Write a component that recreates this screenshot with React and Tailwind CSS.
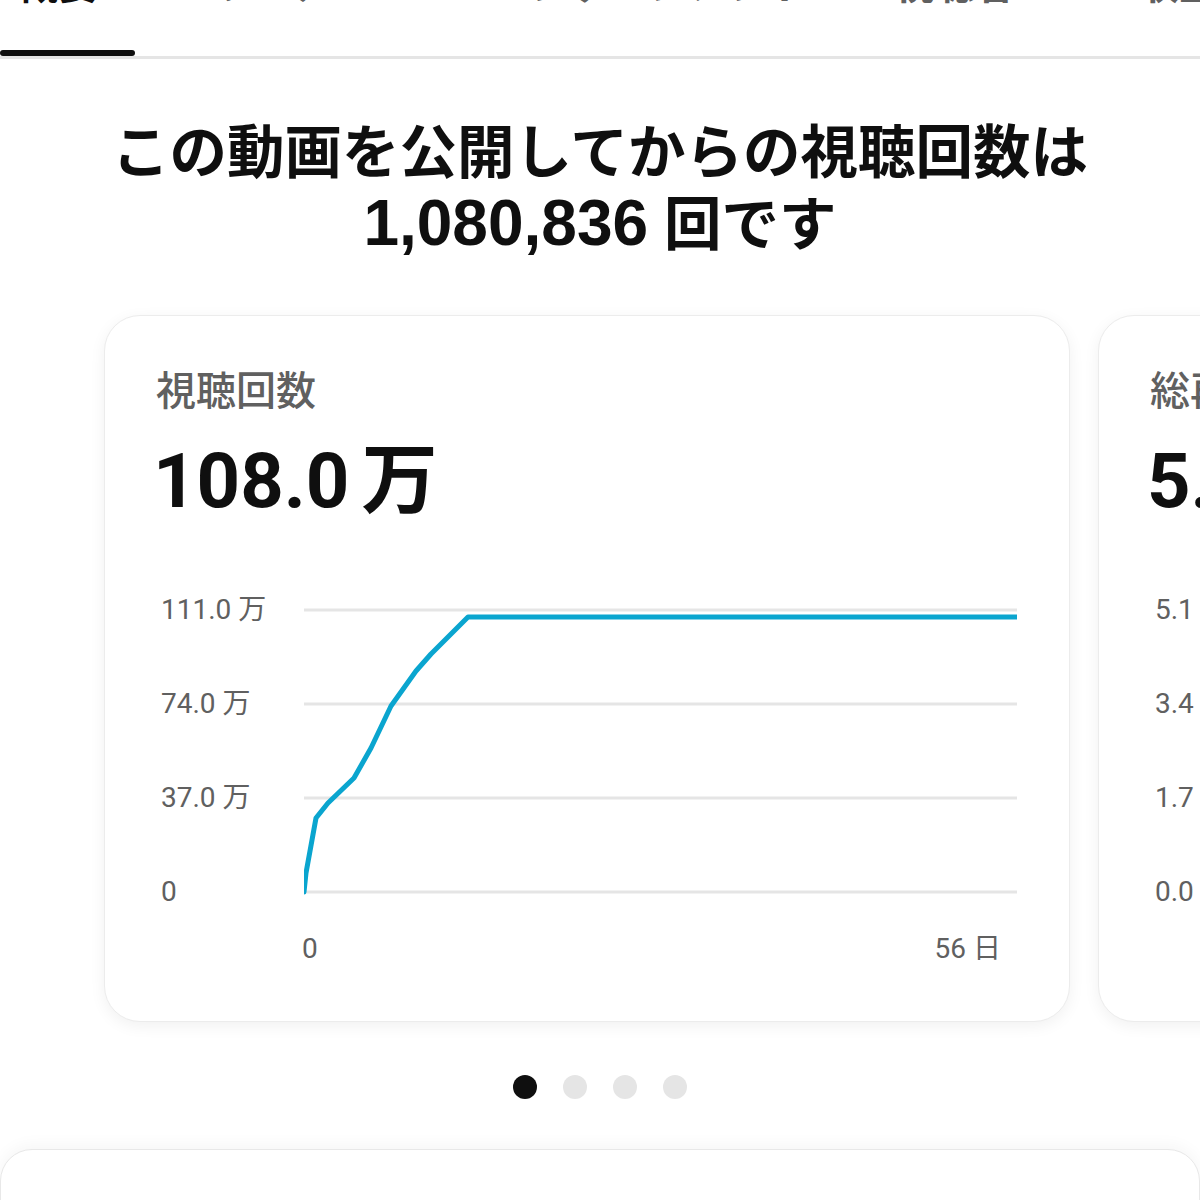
const TABS = [
  { label: '概要', active: true, cls: 'w-[135px] pl-[18px] text-[#0f0f0f]' },
  { label: 'リーチ', cls: 'ml-[75px] text-[#606060]' },
  { label: 'エンゲージメント', cls: 'ml-[160px] text-[#606060]' },
  { label: '視聴者', cls: 'ml-[85px] text-[#606060]' },
  { label: '収益', cls: 'ml-[125px] text-[#606060]' },
]

const VIEWS_LINE = [
  [0, 329], [2, 310], [12, 255], [24, 240], [50, 215], [67, 185],
  [87, 143], [112, 108], [127, 91], [164, 54], [713, 54],
]

const CARDS = [
  {
    title: '視聴回数',
    value: '108.0',
    unit: '万',
    ticks: ['111.0 万', '74.0 万', '37.0 万', '0'],
    line: VIEWS_LINE,
  },
  {
    title: '総再生時間（単位: 時間）',
    value: '5.0',
    unit: '万',
    ticks: ['5.1 万', '3.4 万', '1.7 万', '0.0'],
    line: [[0, 329], [10, 240], [60, 150], [170, 60], [713, 60]],
  },
]

function Chart({ ticks, line }) {
  const pts = line.map(([x, y]) => `${x},${y}`).join(' ')
  return (
    <div>
      <div className="flex">
        <div className="w-[148px] shrink-0 pl-[5px] flex flex-col">
          {ticks.map((t) => (
            <div key={t} className="h-[94px] flex items-center text-[28px] text-[#606060] whitespace-nowrap">
              {t}
            </div>
          ))}
        </div>
        <svg width="713" height="376" viewBox="0 0 713 376" className="shrink-0">
          {[47, 141, 235, 329].map((y) => (
            <line key={y} x1="0" x2="713" y1={y} y2={y} stroke="#e5e5e5" strokeWidth="3" />
          ))}
          <polyline points={pts} fill="none" stroke="#0aa5cf" strokeWidth="5" strokeLinejoin="round" strokeLinecap="round" />
        </svg>
      </div>
      {/* x axis */}
      <div className="-mt-[6px] ml-[146px] pr-[14px] flex justify-between text-[28px] leading-[32px] text-[#606060]">
        <span>0</span>
        <span>56 日</span>
      </div>
    </div>
  )
}

function StatCard({ card }) {
  return (
    <div className="w-[966px] h-[707px] shrink-0 rounded-[36px] bg-white border border-[#ececec] shadow-[0_4px_16px_rgba(0,0,0,0.06)] pt-[52px] pl-[51px] pr-[54px]">
      <p className="text-[40px] leading-[48px] font-medium text-[#606060] whitespace-nowrap">{card.title}</p>
      <p className="mt-[28px] -ml-[3px] text-[76px] leading-[74px] font-bold text-[#0f0f0f] whitespace-nowrap">
        {card.value}
        <span className="ml-[12px]">{card.unit}</span>
      </p>
      <div className="mt-[45px]">
        <Chart ticks={card.ticks} line={card.line} />
      </div>
    </div>
  )
}

export default function App() {
  return (
    <div className="w-[1200px] h-[1200px] overflow-hidden bg-white font-[Roboto,'Noto_Sans_CJK_JP',sans-serif]">
      {/* tabs */}
      <div className="h-[59px] border-b-[3px] border-[#e5e5e5] flex">
        {TABS.map((t) => (
          <div key={t.label} className={`shrink-0 flex flex-col ${t.cls}`}>
            <span className="-mt-[34px] text-[40px] leading-[40px] font-bold whitespace-nowrap">{t.label}</span>
            {t.active && <div className="mt-auto -ml-[18px] h-[6px] w-[135px] rounded-full bg-[#0f0f0f]" />}
          </div>
        ))}
      </div>

      {/* headline */}
      <h1 className="mt-[58px] text-center text-[57.5px] leading-[72px] font-bold text-[#0f0f0f] font-['Liberation_Sans','Noto_Sans_CJK_JP',sans-serif]">
        この動画を公開してからの視聴回数は
        <br />
        <span className="text-[64px] leading-none">1,080,836</span> 回です
      </h1>

      {/* carousel */}
      <div className="mt-[54px] pl-[104px] flex gap-[28px]">
        {CARDS.map((c) => (
          <StatCard key={c.title} card={c} />
        ))}
      </div>

      {/* dots */}
      <div className="mt-[53px] flex justify-center gap-[26px]">
        <span className="w-[24px] h-[24px] rounded-full bg-[#0f0f0f]" />
        <span className="w-[24px] h-[24px] rounded-full bg-[#e5e5e5]" />
        <span className="w-[24px] h-[24px] rounded-full bg-[#e5e5e5]" />
        <span className="w-[24px] h-[24px] rounded-full bg-[#e5e5e5]" />
      </div>

      {/* next section */}
      <div className="mt-[50px] h-[200px] rounded-t-[32px] border border-[#e8e8e8] bg-white shadow-[0_-4px_16px_rgba(0,0,0,0.04)]" />
    </div>
  )
}
